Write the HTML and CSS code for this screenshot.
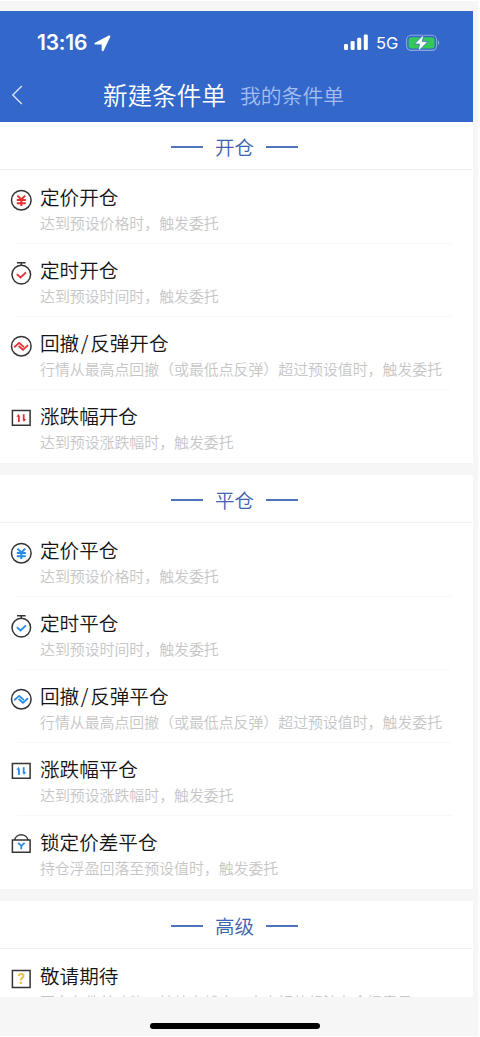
FILE: index.html
```html
<!DOCTYPE html>
<html lang="zh-CN">
<head>
<meta charset="utf-8">
<title>新建条件单</title>
<link rel="stylesheet" href="styles.css">
</head>
<body>
<svg class="defs" aria-hidden="true">
  <symbol id="yen" viewBox="0 0 24 26"><circle class="ink" cx="12.3" cy="13.2" r="9.8"/><path class="accent" d="M8.4 8.6 12.3 12.4l3.9-3.8M12.3 12.4v6.6M7.8 13.1h9M7.8 16.2h9"/></symbol>
  <symbol id="timer" viewBox="0 0 24 26"><circle class="ink" cx="12.3" cy="14.6" r="9.3"/><path class="ink" d="M8 2.7h8.6M12.3 2.7v2.6"/><path class="accent thin" d="m7.8 14.2 3.7 3.3 5.5-5.2"/></symbol>
  <symbol id="wave" viewBox="0 0 24 26"><circle class="ink" cx="12.3" cy="13.2" r="9.8"/><path class="accent thin" d="m5.2 14.2 4.9-4.3 4.8 4.3M9.6 13l4.4 3.8 5-4.6"/></symbol>
  <symbol id="range" viewBox="0 0 24 26"><path class="ink" d="M3.4 4.4h17.7v14.8H3.4z"/><path class="accent thin" d="M9.9 16V9.5M14.7 8.2v6.5"/><path class="tip" d="m9.9 7.6v3.2H7.4zM14.7 16.3v-3.2h2.5z"/></symbol>
  <symbol id="lock" viewBox="0 0 24 26"><path class="ink" d="M3.4 8h17.7v12.2H3.4zM5.6 8a6.8 6.3 0 0 1 13.4 0"/><path class="accent thin" d="m9 10.8 3.3 3 3.3-3M12.3 13.6v3.6"/></symbol>
  <symbol id="box" viewBox="0 0 24 26"><path class="ink" d="M3.4 4.6h17.7v17H3.4z"/></symbol>
</svg>
<main class="screen">
  <header class="top">
    <div class="status">
      <span class="time">13:16</span>
      <svg class="locate" viewBox="0 0 17 17"><path d="M15.3 1.5 1.5 8.6h7.2v6.6z"/></svg>
      <svg class="signal" viewBox="0 0 25 16"><rect y="10" width="4" height="6" rx="1.2"/><rect x="6.6" y="7" width="4" height="9" rx="1.2"/><rect x="13.2" y="3.8" width="4" height="12.2" rx="1.2"/><rect x="19.8" y=".5" width="4" height="15.5" rx="1.2"/></svg>
      <span class="net">5G</span>
      <svg class="battery" viewBox="0 0 34 18"><rect x=".6" y="1.2" width="30" height="15.2" rx="4.6" fill="none" stroke="#8ba8e0" stroke-width="1.1"/><rect x="2.6" y="3.2" width="26" height="11.2" rx="2.7" fill="#35c759"/><path d="M32 6.3c1.6.7 1.6 4 0 4.8z" fill="#8ba8e0"/><path d="M17.8.4 8.6 10h5L11.9 17.6 21.9 7.6h-5.6z" fill="#fff" stroke="#3467ca" stroke-width=".7"/></svg>
    </div>
    <nav class="nav">
      <svg class="back" viewBox="0 0 12 20"><path d="M10.8 1 1.8 10l9 9"/></svg>
      <span class="tab on">新建条件单</span>
      <span class="tab">我的条件单</span>
    </nav>
  </header>
  <section class="group red">
    <h2 class="head">开仓</h2>
    <div class="row"><svg class="icon"><use href="#yen"/></svg><div class="copy"><h3>定价开仓</h3><p>达到预设价格时，触发委托</p></div></div>
    <div class="row"><svg class="icon"><use href="#timer"/></svg><div class="copy"><h3>定时开仓</h3><p>达到预设时间时，触发委托</p></div></div>
    <div class="row"><svg class="icon"><use href="#wave"/></svg><div class="copy"><h3>回撤<span class="slash">/</span>反弹开仓</h3><p>行情从最高点回撤（或最低点反弹）超过预设值时，触发委托</p></div></div>
    <div class="row"><svg class="icon"><use href="#range"/></svg><div class="copy"><h3>涨跌幅开仓</h3><p>达到预设涨跌幅时，触发委托</p></div></div>
  </section>
  <section class="group blue">
    <h2 class="head">平仓</h2>
    <div class="row"><svg class="icon"><use href="#yen"/></svg><div class="copy"><h3>定价平仓</h3><p>达到预设价格时，触发委托</p></div></div>
    <div class="row"><svg class="icon"><use href="#timer"/></svg><div class="copy"><h3>定时平仓</h3><p>达到预设时间时，触发委托</p></div></div>
    <div class="row"><svg class="icon"><use href="#wave"/></svg><div class="copy"><h3>回撤<span class="slash">/</span>反弹平仓</h3><p>行情从最高点回撤（或最低点反弹）超过预设值时，触发委托</p></div></div>
    <div class="row"><svg class="icon"><use href="#range"/></svg><div class="copy"><h3>涨跌幅平仓</h3><p>达到预设涨跌幅时，触发委托</p></div></div>
    <div class="row"><svg class="icon"><use href="#lock"/></svg><div class="copy"><h3>锁定价差平仓</h3><p>持仓浮盈回落至预设值时，触发委托</p></div></div>
  </section>
  <section class="group last">
    <h2 class="head">高级</h2>
    <div class="row"><svg class="icon"><use href="#box"/><text x="12.3" y="17.9" class="mark">?</text></svg><div class="copy"><h3>敬请期待</h3><p>更多条件单功能，持续上线中，大家好的想法在全提意见</p></div></div>
  </section>
  <div class="home"></div>
</main>
</body>
</html>
```
FILE: styles.css
```css
* { box-sizing: border-box; }
body {
  margin: 0;
  width: 480px;
  height: 1037px;
  overflow: hidden;
  background: #f6f6f7;
  border-top: 1px solid #fff;
  border-right: 2px solid #fdfdfd;
  border-bottom: 1px solid #fff;
  font-family: "Noto Sans CJK SC", sans-serif;
}
.defs { display: none; }
.screen { width: 473px; padding-top: 10px; }
.top { height: 111px; background: #3467ca; color: #fff; }
.status { height: 60px; padding: 4px 33px 0 37px; display: flex; align-items: center; }
.time { width: 57px; font: 600 21px/24px Inter, sans-serif; letter-spacing: -.2px; }
.locate { width: 17px; height: 17px; fill: #fff; stroke: #fff; stroke-width: 2; stroke-linejoin: round; }
.signal { width: 25px; height: 16px; margin-left: auto; margin-bottom: 2px; fill: #fff; }
.net { margin: 0 7px 0 7px; width: 23px; font: 400 16.5px/24px Inter, sans-serif; white-space: nowrap; }
.battery { width: 34px; height: 18px; }
.nav { height: 48px; padding-left: 11px; display: flex; align-items: center; }
.back { width: 12px; height: 20px; margin-right: 80px; fill: none; stroke: #dce6fb; stroke-width: 1.3; }
.tab { padding-bottom: 1px; font-size: 20.8px; line-height: 34px; font-weight: 350; color: #a3bdf0; }
.tab.on { width: 137px; padding-bottom: 2px; font-size: 24.6px; color: #fff; }
.group { background: #fff; margin-bottom: 12px; }
.head {
  height: 48px;
  margin: 0;
  padding: 2px 4px 0 0;
  border-bottom: 1px solid #f1f1f1;
  display: flex;
  align-items: center;
  justify-content: center;
  gap: 12px;
  font-size: 19.5px;
  line-height: 28px;
  font-weight: 350;
  color: #3d63b0;
}
.head::before, .head::after { content: ""; width: 32px; height: 2px; background: #5074b9; }
.row { height: 73px; padding: 14px 0 0 9px; display: flex; position: relative; }
.row:last-child { height: 74px; }
.row + .row::before { content: ""; position: absolute; left: 17px; right: 21px; top: 0; height: 1px; background: #f8f8f8; }
.icon { width: 24px; height: 26px; margin: 3px 7px 0 0; flex: none; }
.ink { fill: none; stroke: #343434; stroke-width: 1.5; }
.accent { fill: none; stroke: currentColor; stroke-width: 2; }
.thin { stroke-width: 1.8; }
.tip { fill: currentColor; }
.red .icon { color: #e52f32; }
.blue .icon { color: #258ae9; }
.mark { fill: #e9bd32; font: 600 14px Inter, sans-serif; text-anchor: middle; }
.copy { white-space: nowrap; }
h3 { margin: 0; font-size: 19.6px; line-height: 26px; font-weight: 350; color: #141414; }
.slash { display: inline-block; width: 11px; text-align: center; }
.copy p { margin: 2px 0 0; font-size: 14.9px; line-height: 22px; font-weight: 350; color: #c6c6c6; }
.last { height: 96px; overflow: hidden; margin: 0; }
.home { width: 170px; height: 6px; margin: 26px 0 0 150px; border-radius: 3px; background: #000; }
```
